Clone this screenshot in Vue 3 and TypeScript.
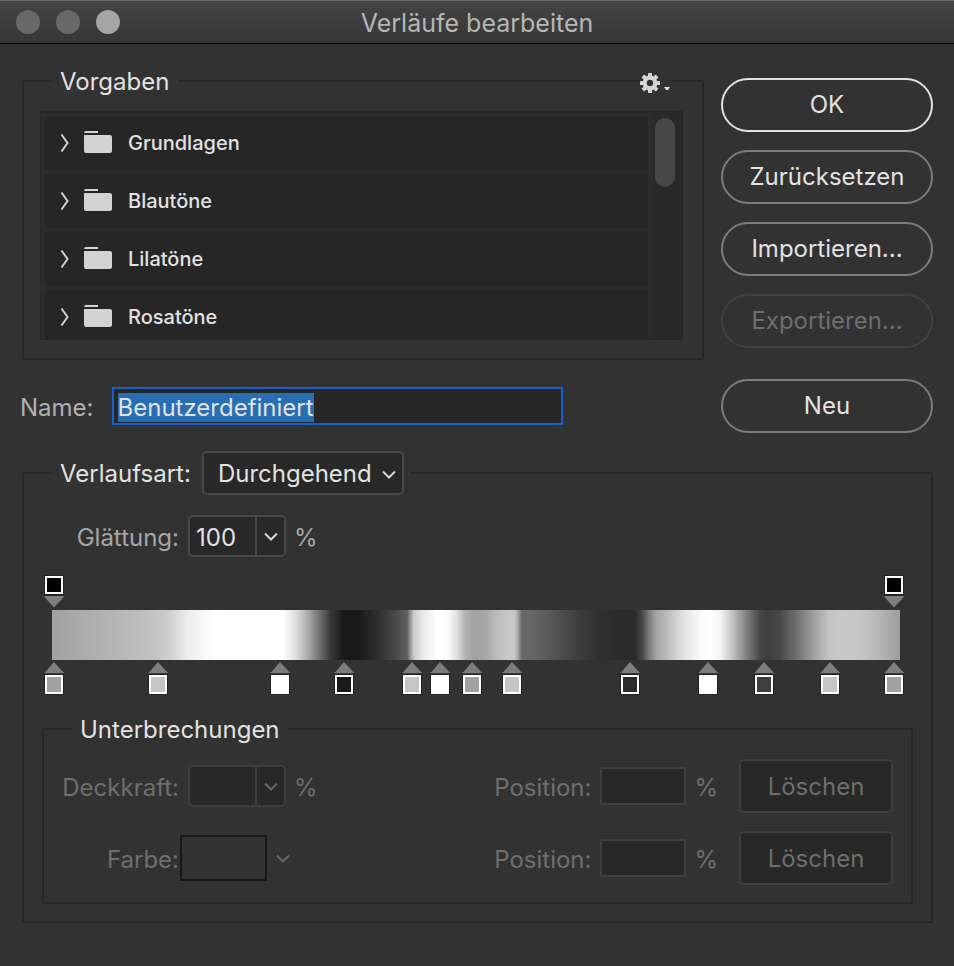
<script setup lang="ts">
import { onMounted, ref } from 'vue'

interface Stop {
  at: number
  color: string
}

const presets: string[] = ['Grundlagen', 'Blautöne', 'Lilatöne', 'Rosatöne']
const name = ref('Benutzerdefiniert')
const smoothness = ref('100')
const nameInput = ref<HTMLInputElement | null>(null)

const opacityStops: Stop[] = [
  { at: 0, color: '#000000' },
  { at: 100, color: '#000000' },
]

const colorStops: Stop[] = [
  { at: 0, color: '#a1a1a1' },
  { at: 12.4, color: '#c6c6c6' },
  { at: 26.9, color: '#ffffff' },
  { at: 34.5, color: '#1a1a1a' },
  { at: 42.6, color: '#c6c6c6' },
  { at: 46, color: '#ffffff' },
  { at: 49.8, color: '#a1a1a1' },
  { at: 54.5, color: '#c6c6c6' },
  { at: 68.6, color: '#2a2a2a' },
  { at: 77.9, color: '#ffffff' },
  { at: 84.5, color: '#3f3f3f' },
  { at: 92.4, color: '#c6c6c6' },
  { at: 100, color: '#a1a1a1' },
]

onMounted(() => {
  nameInput.value?.focus()
  nameInput.value?.select()
})
</script>

<template>
  <div class="dialog">
    <header class="titlebar">
      <div class="lights">
        <span class="light"></span>
        <span class="light"></span>
        <span class="light active"></span>
      </div>
      <h1>Verläufe bearbeiten</h1>
    </header>

    <main class="content">
      <div class="upper">
        <div class="left">
          <fieldset class="group presets">
            <legend>Vorgaben</legend>
            <button class="gear" type="button" aria-label="Optionen">
              <svg width="32" height="22" viewBox="0 0 32 22">
                <g transform="translate(11 11)" fill="#d6d6d6">
                  <path fill-rule="evenodd" d="M0-7.4A7.4 7.4 0 1 1 0 7.4A7.4 7.4 0 1 1 0-7.4ZM0-3.2A3.2 3.2 0 1 0 0 3.2A3.2 3.2 0 1 0 0-3.2Z" />
                  <rect v-for="n in 8" :key="n" x="-2" y="-10" width="4" height="4" rx="0.5" :transform="`rotate(${n * 45})`" />
                </g>
                <path d="M25 15h6l-2 3h-2z" fill="#e0e0e0" />
              </svg>
            </button>
            <div class="list">
              <ul>
                <li v-for="preset in presets" :key="preset">
                  <svg class="arrow" width="10" height="20" viewBox="0 0 10 20">
                    <path d="M1.500 1.500 7.500 10l-6 8.500" fill="none" stroke="#cfcfcf" stroke-width="2" />
                  </svg>
                  <svg class="folder" width="28" height="24" viewBox="0 0 28 24">
                    <path d="M0 2q0-2 2-2h12v2zM0 4h26q2 0 2 2v14q0 2-2 2H2q-2 0-2-2z" fill="#d3d3d3" />
                  </svg>
                  <span>{{ preset }}</span>
                </li>
              </ul>
              <div class="scroll"><div class="thumb"></div></div>
            </div>
          </fieldset>

          <div class="name-row">
            <label for="name">Name:</label>
            <input id="name" ref="nameInput" v-model="name" type="text" spellcheck="false" autocomplete="off" />
          </div>
        </div>

        <div class="actions">
          <button class="pill primary" type="button">OK</button>
          <button class="pill" type="button">Zurücksetzen</button>
          <button class="pill" type="button">Importieren...</button>
          <button class="pill" type="button" disabled>Exportieren...</button>
          <button class="pill new" type="button">Neu</button>
        </div>
      </div>

      <fieldset class="group editor">
        <legend class="kind">
          <label for="kind">Verlaufsart:</label>
          <span class="select">
            <select id="kind">
              <option>Durchgehend</option>
            </select>
            <svg width="14" height="9" viewBox="0 0 14 9"><path d="M1 1.500 7 7.500l6-6" /></svg>
          </span>
        </legend>

        <div class="field">
          <label for="smooth">Glättung:</label>
          <span class="combo">
            <input id="smooth" v-model="smoothness" type="text" />
            <button type="button" aria-label="Glättung wählen">
              <svg width="14" height="9" viewBox="0 0 14 9"><path d="M1 1.500 7 7.500l6-6" /></svg>
            </button>
          </span>
          <span class="unit">%</span>
        </div>

        <div class="gradient">
          <div class="track">
            <button
              v-for="(stop, i) in opacityStops"
              :key="i"
              class="stop"
              type="button"
              aria-label="Deckkraftunterbrechung"
              :style="{ left: stop.at + '%' }"
            >
              <svg width="24" height="34" viewBox="0 0 24 34">
                <path d="M1.500 22h21L12 33.500z" fill="#7d7d7d" />
                <path d="M2 1h20v21H2z" fill="#222222" />
                <path d="M3 2h18v18H3z" fill="#ffffff" />
                <path d="M5 4h14v14H5z" :fill="stop.color" />
              </svg>
            </button>
          </div>
          <div class="ramp"></div>
          <div class="track">
            <button
              v-for="(stop, i) in colorStops"
              :key="i"
              class="stop"
              type="button"
              aria-label="Farbunterbrechung"
              :style="{ left: stop.at + '%' }"
            >
              <svg width="24" height="36" viewBox="0 0 24 36">
                <path d="M2 13.500 12 2l10.500 11.500z" fill="#7d7d7d" />
                <path d="M2 13.500h20V35H2z" fill="#222222" />
                <path d="M3 15h18v19H3z" fill="#ffffff" />
                <path d="M5 17h14v15H5z" :fill="stop.color" />
              </svg>
            </button>
          </div>
        </div>

        <fieldset class="group stops" disabled>
          <legend>Unterbrechungen</legend>
          <div class="stop-row">
            <div class="field">
              <label for="opacity">Deckkraft:</label>
              <span class="combo">
                <input id="opacity" type="text" />
                <button type="button" aria-label="Deckkraft wählen">
                  <svg width="14" height="9" viewBox="0 0 14 9"><path d="M1 1.500 7 7.500l6-6" /></svg>
                </button>
              </span>
              <span class="unit">%</span>
            </div>
            <div class="field position">
              <label for="pos1">Position:</label>
              <input id="pos1" class="box" type="text" />
              <span class="unit">%</span>
              <button class="delete" type="button">Löschen</button>
            </div>
          </div>
          <div class="stop-row">
            <div class="field color">
              <label for="color">Farbe:</label>
              <button id="color" class="swatch" type="button"></button>
              <svg width="14" height="9" viewBox="0 0 14 9"><path d="M1 1.500 7 7.500l6-6" /></svg>
            </div>
            <div class="field position">
              <label for="pos2">Position:</label>
              <input id="pos2" class="box" type="text" />
              <span class="unit">%</span>
              <button class="delete" type="button">Löschen</button>
            </div>
          </div>
        </fieldset>
      </fieldset>
    </main>
  </div>
</template>

<style>
body {
  margin: 0;
  background: #323232;
}
</style>

<style scoped>
.dialog,
.dialog * {
  box-sizing: border-box;
}

.dialog {
  color: #e2e2e2;
  font: 24px/30px Inter, "Liberation Sans", sans-serif;
}

button,
input,
select {
  margin: 0;
  padding: 0;
  border: 0;
  color: inherit;
  font: inherit;
  outline: none;
}

svg {
  display: block;
}

.titlebar {
  display: grid;
  grid-template-columns: 1fr auto 1fr;
  align-items: center;
  height: 44px;
  padding: 0 16px;
  border-top: 1px solid #6a6a6a;
  border-bottom: 1px solid #000000;
  background: linear-gradient(#444444, #373737);
}

.lights {
  display: flex;
  gap: 16px;
}

.light {
  width: 24px;
  height: 24px;
  border-radius: 50%;
  background: #686868;
}

.light.active {
  background: #a5a5a5;
}

h1 {
  margin: 0;
  padding-top: 2px;
  color: #b6b6b6;
  font-size: 25px;
  font-weight: 400;
}

.content {
  padding: 22px 21px 42px 22px;
}

.upper {
  display: grid;
  grid-template-columns: 1fr 212px;
  gap: 17px;
  margin-bottom: 18px;
}

.group {
  position: relative;
  min-width: 0;
  margin: 0;
  border: 2px solid #272727;
  border-radius: 2px;
}

.group > legend {
  height: 30px;
  padding: 0 9px;
  line-height: 32px;
}

.presets > legend {
  margin-left: 11px;
}

.presets {
  padding: 15px 19px 18px 16px;
}

.gear {
  position: absolute;
  top: -10px;
  right: 29px;
  margin-top: -14px;
  padding: 0 2px 0 0;
  background: #323232;
}

.list {
  display: flex;
  height: 229px;
  overflow: hidden;
  border: 1px solid #272727;
  border-top-width: 2px;
  background: #2c2c2c;
}

ul {
  display: flex;
  flex: 1;
  flex-direction: column;
  gap: 4px;
  margin: 0;
  padding: 3px 4px 0;
  list-style: none;
  font-size: 20px;
  font-weight: 500;
}

li {
  display: flex;
  flex: none;
  align-items: center;
  height: 54px;
  padding-left: 15px;
  background: #262626;
}

.folder {
  margin: 0 16px 0 14px;
}

.scroll {
  width: 30px;
  padding: 5px 6px 0 3px;
  background: #292929;
}

.thumb {
  width: 20px;
  height: 69px;
  border-radius: 10px;
  background: #474747;
}

.name-row {
  display: flex;
  align-items: center;
  gap: 18px;
  margin: 27px 141px 0 -2px;
  color: #b0b0b0;
}

.name-row label {
  padding-top: 4px;
}

.name-row input {
  flex: 1;
  min-width: 0;
  height: 38px;
  padding: 2px 4px 0;
  border: 2px solid #1462cf;
  background: #262626;
  color: #e2e2e2;
  line-height: 32px;
}

.name-row input::selection {
  background: #276eb2;
  color: #e2e2e2;
}

.actions {
  display: flex;
  flex-direction: column;
  gap: 18px;
  padding-top: 12px;
}

.pill {
  height: 54px;
  border: 2px solid #7c7c7c;
  border-radius: 27px;
  background: transparent;
}

.pill.primary {
  border-color: #e2e2e2;
}

.pill:disabled {
  border-color: #414141;
  color: #6e6e6e;
}

.pill.new {
  margin-top: 13px;
}

.editor {
  padding: 20px 18px 17px;
}

.group > .kind {
  display: flex;
  align-items: center;
  gap: 11px;
  height: 44px;
  margin-left: 9px;
  padding-right: 6px;
}

.kind label {
  padding-top: 2px;
}

.kind select,
.combo {
  border: 2px solid #494949;
  border-radius: 5px;
  background: #282828;
}

.select {
  position: relative;
}

.select select {
  display: block;
  width: 202px;
  height: 44px;
  padding: 2px 30px 0 14px;
  appearance: none;
}

.select svg {
  position: absolute;
  top: 19px;
  right: 8px;
  pointer-events: none;
}

.field {
  display: flex;
  align-items: center;
}

.field > label {
  width: 135px;
  margin-right: 9px;
  padding-top: 4px;
  color: #a6a6a6;
  text-align: right;
}

.select path,
.field path {
  fill: none;
  stroke: #d6d6d6;
  stroke-width: 2;
}

.combo {
  display: flex;
  width: 98px;
  height: 42px;
}

.combo input {
  flex: 1;
  min-width: 0;
  padding: 3px 0 0 6px;
  background: transparent;
}

.combo button {
  display: grid;
  place-items: center;
  width: 29px;
  border-left: 2px solid #494949;
  background: transparent;
}

.unit {
  margin-left: 8px;
  padding-top: 4px;
  color: #a6a6a6;
}

.editor > .field {
  margin-left: 2px;
}

.gradient {
  margin: 17px 13px 0 10px;
}

.track {
  position: relative;
  height: 36px;
  margin: 0 6px 0 2px;
}

.stop {
  position: absolute;
  top: 0;
  width: 24px;
  margin-left: -12px;
  background: transparent;
}

.ramp {
  height: 50px;
  background: linear-gradient(
    90deg,
    #a2a2a2 0%,
    #b4b4b4 7.200%,
    #c4c4c4 12.400%,
    #cfcfcf 13.900%,
    #ececec 16%,
    #f8f8f8 17.800%,
    #ffffff 19.500%,
    #ffffff 27.200%,
    #e0e0e0 28.700%,
    #a6a6a6 30.300%,
    #6a6a6a 31.700%,
    #3a3a3a 32.800%,
    #1a1a1a 34.300%,
    #1a1a1a 36.300%,
    #323232 38.700%,
    #4c4c4c 40.700%,
    #606060 41.900%,
    #909090 42.200%,
    #cccccc 42.700%,
    #eaeaea 43.800%,
    #ffffff 45.400%,
    #fbfbfb 46.700%,
    #dddddd 47.800%,
    #b4b4b4 48.700%,
    #a2a2a2 49.700%,
    #a6a6a6 51.100%,
    #bcbcbc 52.500%,
    #c7c7c7 53.700%,
    #c7c7c7 54.600%,
    #a0a0a0 55%,
    #696969 55.400%,
    #626262 57.500%,
    #4f4f4f 59.900%,
    #3c3c3c 62.300%,
    #303030 64.600%,
    #2a2a2a 67%,
    #2a2a2a 68.800%,
    #484848 69.600%,
    #808080 70.500%,
    #a6a6a6 71.300%,
    #bbbbbb 72.500%,
    #e0e0e0 74.400%,
    #fafafa 76.400%,
    #ffffff 77.600%,
    #f5f5f5 78.800%,
    #c0c0c0 80.300%,
    #7c7c7c 82%,
    #474747 83.500%,
    #3f3f3f 84.300%,
    #474747 85.800%,
    #787878 88.200%,
    #9e9e9e 89.700%,
    #c4c4c4 91.700%,
    #c8c8c8 92.900%,
    #c6c6c6 95.300%,
    #b7b7b7 97.300%,
    #9e9e9e 100%
  );
}

.stops {
  margin-top: 18px;
  padding: 15px 18px 17px 0;
  color: #6e6e6e;
}

.stops > legend {
  margin-left: 27px;
  color: #e2e2e2;
}

.stop-row {
  display: flex;
  justify-content: space-between;
}

.stop-row + .stop-row {
  margin-top: 18px;
}

.stops .field > label,
.stops .unit {
  color: #6e6e6e;
}

.stops .combo,
.stops .combo button {
  border-color: #3f3f3f;
}

.stops .field path {
  stroke: #666666;
}

.stops .position > label {
  width: auto;
}

.box {
  width: 86px;
  height: 38px;
  border: 2px solid #3f3f3f;
  background: #282828;
}

.delete {
  width: 154px;
  height: 54px;
  margin-left: 21px;
  padding-top: 2px;
  border: 2px solid #3f3f3f;
  border-radius: 5px;
  background: #282828;
}

.stops .color > label {
  margin-right: 1px;
}

.swatch {
  width: 87px;
  height: 46px;
  margin-right: 9px;
  border: 2px solid #171717;
  background: transparent;
}
</style>
